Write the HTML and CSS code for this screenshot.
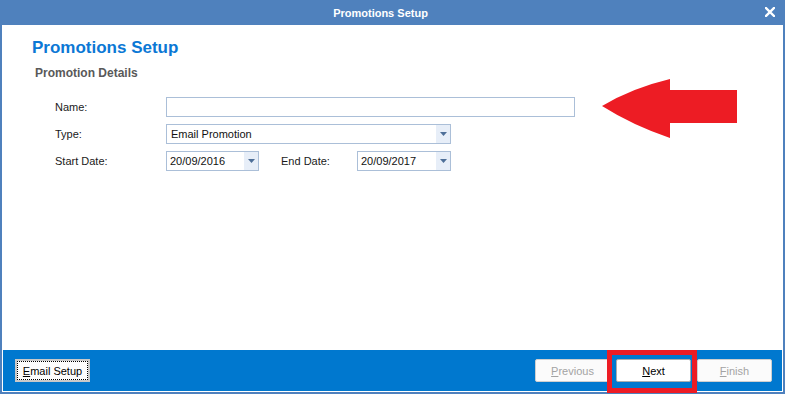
FILE: index.html
```html
<!DOCTYPE html>
<html>
<head>
<meta charset="utf-8">
<title>Promotions Setup</title>
<link rel="stylesheet" href="styles.css">
</head>
<body>
<div class="screen">
  <div class="window">
    <div class="titlebar">
      <div class="title">Promotions Setup</div>
      <div class="close">
        <svg width="10" height="10" viewBox="0 0 10 10"><path d="M1 1L9 9M9 1L1 9" stroke="#fff" stroke-width="2.4" stroke-linecap="square"/></svg>
      </div>
    </div>
    <div class="content">
      <h1 class="heading">Promotions Setup</h1>
      <h2 class="subheading">Promotion Details</h2>
      <div class="form">
        <div class="row">
          <span class="label">Name:</span>
          <div class="field name"></div>
        </div>
        <div class="row">
          <span class="label">Type:</span>
          <div class="field combo type">
            <span class="val">Email Promotion</span>
            <span class="drop"><svg width="7" height="4" viewBox="0 0 7 4"><path d="M0 0H7L3.5 4Z" fill="#4e6f98"/></svg></span>
          </div>
        </div>
        <div class="row">
          <span class="label">Start Date:</span>
          <div class="field combo date start">
            <span class="val">20/09/2016</span>
            <span class="drop"><svg width="7" height="4" viewBox="0 0 7 4"><path d="M0 0H7L3.5 4Z" fill="#4e6f98"/></svg></span>
          </div>
          <span class="label end-label">End Date:</span>
          <div class="field combo date end">
            <span class="val">20/09/2017</span>
            <span class="drop"><svg width="7" height="4" viewBox="0 0 7 4"><path d="M0 0H7L3.5 4Z" fill="#4e6f98"/></svg></span>
          </div>
        </div>
      </div>
    </div>
    <div class="footer">
      <button class="btn focus"><u>E</u>mail Setup</button>
      <div class="spacer"></div>
      <div class="nav">
        <button class="btn disabled"><u>P</u>revious</button>
        <button class="btn"><u>N</u>ext</button>
        <button class="btn disabled"><u>F</u>inish</button>
      </div>
    </div>
  </div>
  <svg class="annot" width="785" height="394" viewBox="0 0 785 394">
    <path d="M602 106 Q632 88 670 79 L670 90 L737 90 L737 123 L670 123 L670 138 Q632 125 602 106 Z" fill="#ed1c24"/>
    <rect x="609.5" y="352.5" width="85" height="38" fill="none" stroke="#ed1c24" stroke-width="5"/>
  </svg>
</div>
</body>
</html>
```

FILE: styles.css
```css
html, body {
  margin: 0;
  padding: 0;
  background: #ffffff;
}

.screen {
  position: relative;
  width: 785px;
  height: 394px;
  overflow: hidden;
}

.window {
  width: 785px;
  height: 394px;
  box-sizing: border-box;
  border-left: 2px solid #4f81bd;
  border-right: 2px solid #4f81bd;
  border-bottom: 2px solid #4f81bd;
  background: #ffffff;
  display: flex;
  flex-direction: column;
  font-family: "Liberation Sans", Arial, sans-serif;
}

.titlebar {
  height: 25px;
  background: #4f81bd;
  display: flex;
  flex-shrink: 0;
}

.title {
  width: 757px;
  text-align: center;
  color: #ffffff;
  font-weight: bold;
  font-size: 11px;
  line-height: 23px;
  padding-top: 2px;
}

.close {
  width: 24px;
  display: flex;
  align-items: flex-start;
  padding-top: 7px;
  box-sizing: border-box;
}

.close svg {
  margin-left: 6px;
}

.content {
  flex: 1;
  padding: 13px 0 0 30px;
}

.heading {
  margin: 0;
  font-size: 17px;
  line-height: 20px;
  font-weight: bold;
  color: #0b78d5;
}

.subheading {
  margin: 8px 0 0 3px;
  font-size: 12px;
  line-height: 14px;
  font-weight: bold;
  color: #595959;
}

.form {
  margin: 17px 0 0 23px;
  display: flex;
  flex-direction: column;
  gap: 7px;
}

.row {
  display: flex;
  align-items: center;
  height: 20px;
}

.label {
  width: 111px;
  font-size: 11px;
  color: #1a1a1a;
}

.end-label {
  width: 76px;
  margin-left: 22px;
}

.field {
  height: 20px;
  box-sizing: border-box;
  border: 1px solid #abbfd8;
  background: #ffffff;
}

.name { width: 409px; }
.type { width: 285px; }
.start { width: 93px; }
.end { width: 94px; }

.combo {
  display: flex;
  align-items: stretch;
}

.val {
  flex: 1;
  font-size: 11px;
  line-height: 18px;
  color: #111111;
  padding-left: 4px;
}

.date .val {
  padding-left: 3px;
}

.drop {
  width: 14px;
  background: #e7eef8;
  display: flex;
  align-items: center;
  justify-content: center;
}

.footer {
  height: 41px;
  margin: 0 1px 1px 1px;
  box-sizing: border-box;
  background: #0078cf;
  display: flex;
  align-items: flex-start;
  padding: 9px 10px 0 12px;
  flex-shrink: 0;
}

.spacer {
  flex: 1;
}

.nav {
  display: flex;
  gap: 6px;
}

.btn {
  position: relative;
  width: 75px;
  height: 23px;
  box-sizing: border-box;
  border: 1px solid #adadad;
  border-radius: 2px;
  background: #ffffff;
  font-family: "Liberation Sans", Arial, sans-serif;
  font-size: 11px;
  color: #000000;
  padding: 0;
  margin: 0;
}

.btn u {
  text-decoration-thickness: 1px;
}

.btn.disabled {
  background: #fbfbfb;
  border-color: #cfcfcf;
  color: #a3a3a3;
}

.btn.focus {
  border: 2px solid #c9c9c9;
  border-radius: 0;
  background: #fdfdfd;
}

.btn.focus::after {
  content: "";
  position: absolute;
  left: 0;
  top: 0;
  right: 0;
  bottom: 0;
  border: 1px dotted #000000;
}

.annot {
  position: absolute;
  left: 0;
  top: 0;
  pointer-events: none;
}
```
